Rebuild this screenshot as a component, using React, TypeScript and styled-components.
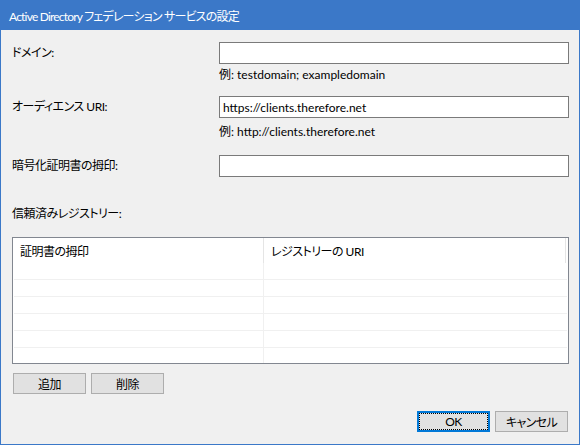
import React from "react";
import styled, { createGlobalStyle } from "styled-components";

const Global = createGlobalStyle`
  html, body { margin: 0; padding: 0; background: #f0f0f0; }
  * { box-sizing: border-box; }
`;

const FONT = `Lato, "Noto Sans CJK JP", sans-serif`;

const Window = styled.div`
  width: 580px;
  height: 445px;
  background: #f0f0f0;
  border: 1px solid #3b78c8;
  border-top: none;
  display: flex;
  flex-direction: column;
  font-family: ${FONT};
  font-size: 12px;
  color: #000;
  font-feature-settings: "palt" 1;
`;

const TitleBar = styled.div`
  height: 30px;
  margin: 0 -1px;
  background: #3b78c8;
  color: #fff;
  display: flex;
  align-items: center;
  padding-left: 9px;
  font-size: 12px;
  letter-spacing: -0.8px;
  flex-shrink: 0;
`;

const Content = styled.div`
  flex: 1;
  display: flex;
  flex-direction: column;
  padding: 0 10px 0 11px;
`;

const FieldRow = styled.div<{ $top: number }>`
  display: grid;
  grid-template-columns: 207px 350px;
  margin-top: ${(p) => p.$top}px;
`;

const Label = styled.div`
  height: 22px;
  display: flex;
  align-items: center;
  line-height: 16px;
  letter-spacing: -0.5px;
`;

const FieldCol = styled.div`
  display: flex;
  flex-direction: column;
`;

const TextBox = styled.div`
  height: 22px;
  background: #fff;
  border: 1px solid #7a7a7a;
  padding: 0 3px;
  display: flex;
  align-items: center;
  white-space: nowrap;
`;

const Hint = styled.div<{ $top: number }>`
  margin-top: ${(p) => p.$top}px;
  height: 16px;
  line-height: 16px;
`;

const SectionLabel = styled.div`
  margin-top: 29px;
  height: 16px;
  line-height: 16px;
  letter-spacing: -0.5px;
`;

const Table = styled.div`
  margin-top: 15px;
  height: 127px;
  border: 1px solid #828790;
  background: #fff;
  display: flex;
  flex-direction: column;
  overflow: hidden;
`;

const HeaderRow = styled.div`
  height: 25px;
  display: flex;
  flex-shrink: 0;
`;

const HeaderCell = styled.div<{ $w?: number }>`
  ${(p) => (p.$w ? `width: ${p.$w}px;` : "flex: 1;")}
  border-right: 1px solid #e5e5e5;
  display: flex;
  align-items: center;
  padding-left: 7px;
  letter-spacing: -0.5px;
  margin-right: ${(p) => (p.$w ? 0 : 2)}px;
`;

const BodyRow = styled.div<{ $last?: boolean }>`
  height: 17px;
  display: flex;
  flex-shrink: 0;
  margin: 0 1px 0 1px;
  border-bottom: ${(p) => (p.$last ? "none" : "1px solid #f0f0f0")};
`;

const BodyCell = styled.div<{ $w?: number }>`
  ${(p) => (p.$w ? `width: ${p.$w}px; border-right: 1px solid #f0f0f0;` : "flex: 1;")}
`;

const ButtonRow = styled.div<{ $top: number; $end?: boolean }>`
  display: flex;
  gap: 5px;
  margin-top: ${(p) => p.$top}px;
  justify-content: ${(p) => (p.$end ? "flex-end" : "flex-start")};
  padding-left: ${(p) => (p.$end ? 0 : 1)}px;
  padding-right: ${(p) => (p.$end ? 1 : 0)}px;
`;

const Button = styled.button<{ $default?: boolean }>`
  width: 73px;
  height: 21px;
  padding: 0;
  margin: 0;
  font-family: ${FONT};
  font-size: 12px;
  font-feature-settings: "palt" 1;
  letter-spacing: -0.6px;
  color: #000;
  background: #e1e1e1;
  border: ${(p) => (p.$default ? "2px solid #0078d7" : "1px solid #adadad")};
  display: flex;
  align-items: center;
  justify-content: center;
  position: relative;
`;

const FocusRect = styled.span`
  position: absolute;
  inset: 0;
  border: 1px dotted #000;
`;

export default function App() {
  const rows = [0, 1, 2, 3, 4, 5];
  return (
    <>
      <Global />
      <Window>
        <TitleBar>Active Directory フェデレーション サービスの設定</TitleBar>
        <Content>
          <FieldRow $top={12}>
            <Label>ドメイン:</Label>
            <FieldCol>
              <TextBox />
              <Hint $top={3}>例: testdomain; exampledomain</Hint>
            </FieldCol>
          </FieldRow>
          <FieldRow $top={13}>
            <Label>オーディエンス URI:</Label>
            <FieldCol>
              <TextBox>https://clients.therefore.net</TextBox>
              <Hint $top={6}>例: http://clients.therefore.net</Hint>
            </FieldCol>
          </FieldRow>
          <FieldRow $top={15}>
            <Label>暗号化証明書の拇印:</Label>
            <FieldCol>
              <TextBox />
            </FieldCol>
          </FieldRow>
          <SectionLabel>信頼済みレジストリー:</SectionLabel>
          <Table>
            <HeaderRow>
              <HeaderCell $w={251}>証明書の拇印</HeaderCell>
              <HeaderCell>レジストリーの URI</HeaderCell>
            </HeaderRow>
            {rows.map((r) => (
              <BodyRow key={r} $last={r === rows.length - 1}>
                <BodyCell $w={250} />
                <BodyCell />
              </BodyRow>
            ))}
          </Table>
          <ButtonRow $top={9}>
            <Button>追加</Button>
            <Button>削除</Button>
          </ButtonRow>
          <ButtonRow $top={17} $end>
            <Button $default>
              <FocusRect />
              OK
            </Button>
            <Button>キャンセル</Button>
          </ButtonRow>
        </Content>
      </Window>
    </>
  );
}
